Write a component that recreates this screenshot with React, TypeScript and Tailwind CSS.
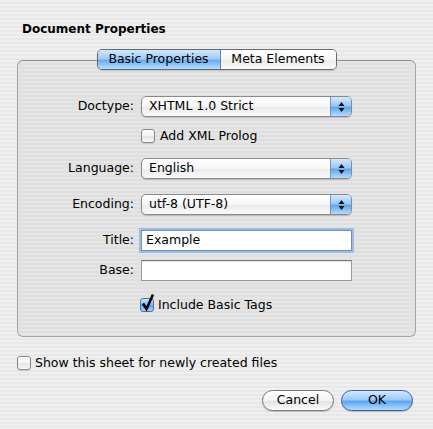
import React from "react";

const stripes =
  "bg-[repeating-linear-gradient(180deg,#efefef_0px,#efefef_2px,#e8e8e8_2px,#e8e8e8_4px)]";

function Arrows() {
  return (
    <svg width="7" height="12" viewBox="0 0 7 12">
      <path d="M3.5 1 L6.5 5 H0.5 Z" fill="#111" />
      <path d="M0.5 7 H6.5 L3.5 11 Z" fill="#111" />
    </svg>
  );
}

function Popup({ value }: { value: string }) {
  return (
    <div className="flex h-[21px] w-[211px] items-stretch overflow-hidden rounded-[5px] border border-[#8a8a8a] bg-[linear-gradient(#ffffff,#f6f6f6_50%,#ebebeb_55%,#f9f9f9)] shadow-[0_1px_1px_rgba(0,0,0,0.18)]">
      <span className="flex flex-1 items-center pl-[7px] text-[12.5px] leading-none text-black">{value}</span>
      <div className="flex w-[21px] items-center justify-center border-l border-[#6d93cc] bg-[linear-gradient(#d3e8fd,#9cc9f6_45%,#62a7ee_55%,#b3dcff)]">
        <Arrows />
      </div>
    </div>
  );
}

function Checkbox({ checked }: { checked?: boolean }) {
  if (checked) {
    return (
      <div className="relative h-[14px] w-[14px] shrink-0 rounded-[3px] border border-[#4a6fa8] bg-[linear-gradient(#cde5fc,#8fc2f5_45%,#5aa2ec_55%,#a8d6ff)]">
        <svg className="absolute -top-[6px] left-0" width="14" height="18" viewBox="0 0 14 18">
          <path d="M2 10.5 L5.5 16 L12 1.5" fill="none" stroke="#000" strokeWidth="2.6" strokeLinejoin="miter" />
        </svg>
      </div>
    );
  }
  return (
    <div className="h-[14px] w-[14px] shrink-0 rounded-[3px] border border-[#8a8a8a] bg-[linear-gradient(#ffffff,#f2f2f2_50%,#e4e4e4_55%,#f8f8f8)] shadow-[0_1px_1px_rgba(0,0,0,0.12)]" />
  );
}

function Label({ children }: { children: React.ReactNode }) {
  return <div className="w-[116px] shrink-0 text-right text-[12.5px] leading-none text-black">{children}</div>;
}

export default function App() {
  return (
    <div
      className={`flex h-[429px] w-[433px] flex-col overflow-hidden pt-[21px] font-['DejaVu_Sans',sans-serif] text-black ${stripes}`}
    >
      <div className="h-[16px] pl-[22px] text-[12px] font-bold leading-[16px]">Document Properties</div>

      {/* tabs */}
      <div className="relative z-10 mt-[12px] flex justify-center">
        <div className="flex h-[21px] w-[240px] overflow-hidden rounded-[5px] border border-[#6a6a6a] shadow-[0_1px_1px_rgba(0,0,0,0.15)]">
          <div className="flex w-[123px] items-center justify-center border-r border-[#6a7fa6] bg-[linear-gradient(#d3e8fd,#a0cbf6_45%,#6aaeef_55%,#b6deff)] text-[12.5px] leading-none">
            Basic Properties
          </div>
          <div className="flex flex-1 items-center justify-center bg-[linear-gradient(#ffffff,#f6f6f6_50%,#ebebeb_55%,#f9f9f9)] text-[12.5px] leading-none">
            Meta Elements
          </div>
        </div>
      </div>

      {/* group box */}
      <div className="mx-[17px] -mt-[10px] flex h-[277px] flex-col rounded-[6px] border border-[#a4a4a4] border-t-[#8e8e8e] bg-[repeating-linear-gradient(180deg,#e5e5e5_0px,#e5e5e5_2px,#dfdfdf_2px,#dfdfdf_4px)] pt-[35px]">
        <div className="flex items-center gap-[7px]">
          <Label>Doctype:</Label>
          <Popup value="XHTML 1.0 Strict" />
        </div>
        <div className="mt-[12px] flex items-center gap-[5px] pl-[123px]">
          <Checkbox />
          <span className="text-[12.5px] leading-none">Add XML Prolog</span>
        </div>
        <div className="mt-[15px] flex items-center gap-[7px]">
          <Label>Language:</Label>
          <Popup value="English" />
        </div>
        <div className="mt-[15px] flex items-center gap-[7px]">
          <Label>Encoding:</Label>
          <Popup value="utf-8 (UTF-8)" />
        </div>
        <div className="mt-[15px] flex items-center gap-[7px]">
          <Label>Title:</Label>
          <div className="flex h-[21px] w-[211px] items-center border border-[#6f8fbf] bg-white pl-[4px] text-[12.5px] leading-none shadow-[0_0_0_2px_#9dbde6]">
            Example
          </div>
        </div>
        <div className="mt-[9px] flex items-center gap-[7px]">
          <Label>Base:</Label>
          <div className="h-[21px] w-[211px] border border-[#9a9a9a] border-t-[#7a7a7a] bg-white shadow-[inset_0_1px_1px_rgba(0,0,0,0.12)]" />
        </div>
        <div className="mt-[17px] flex items-center gap-[4px] pl-[122px]">
          <Checkbox checked />
          <span className="text-[12.5px] leading-none">Include Basic Tags</span>
        </div>
      </div>

      <div className="mt-[19px] flex items-center gap-[4px] pl-[17px]">
        <Checkbox />
        <span className="text-[12.5px] leading-none">Show this sheet for newly created files</span>
      </div>

      <div className="mt-[20px] flex justify-end gap-[7px] pr-[20px]">
        <div className="flex h-[21px] w-[72px] items-center justify-center rounded-full border border-[#7a7a7a] bg-[linear-gradient(#ffffff,#f4f4f4_50%,#e4e4e4_55%,#fafafa)] text-[12.5px] leading-none shadow-[0_1px_1px_rgba(0,0,0,0.2)]">
          Cancel
        </div>
        <div className="flex h-[21px] w-[72px] items-center justify-center rounded-full border border-[#3d5f9e] bg-[linear-gradient(#d3e8fd,#9ccaf7_45%,#5fa5ee_55%,#b3dcff)] text-[12.5px] leading-none shadow-[0_1px_1px_rgba(0,0,0,0.2)]">
          OK
        </div>
      </div>
    </div>
  );
}
